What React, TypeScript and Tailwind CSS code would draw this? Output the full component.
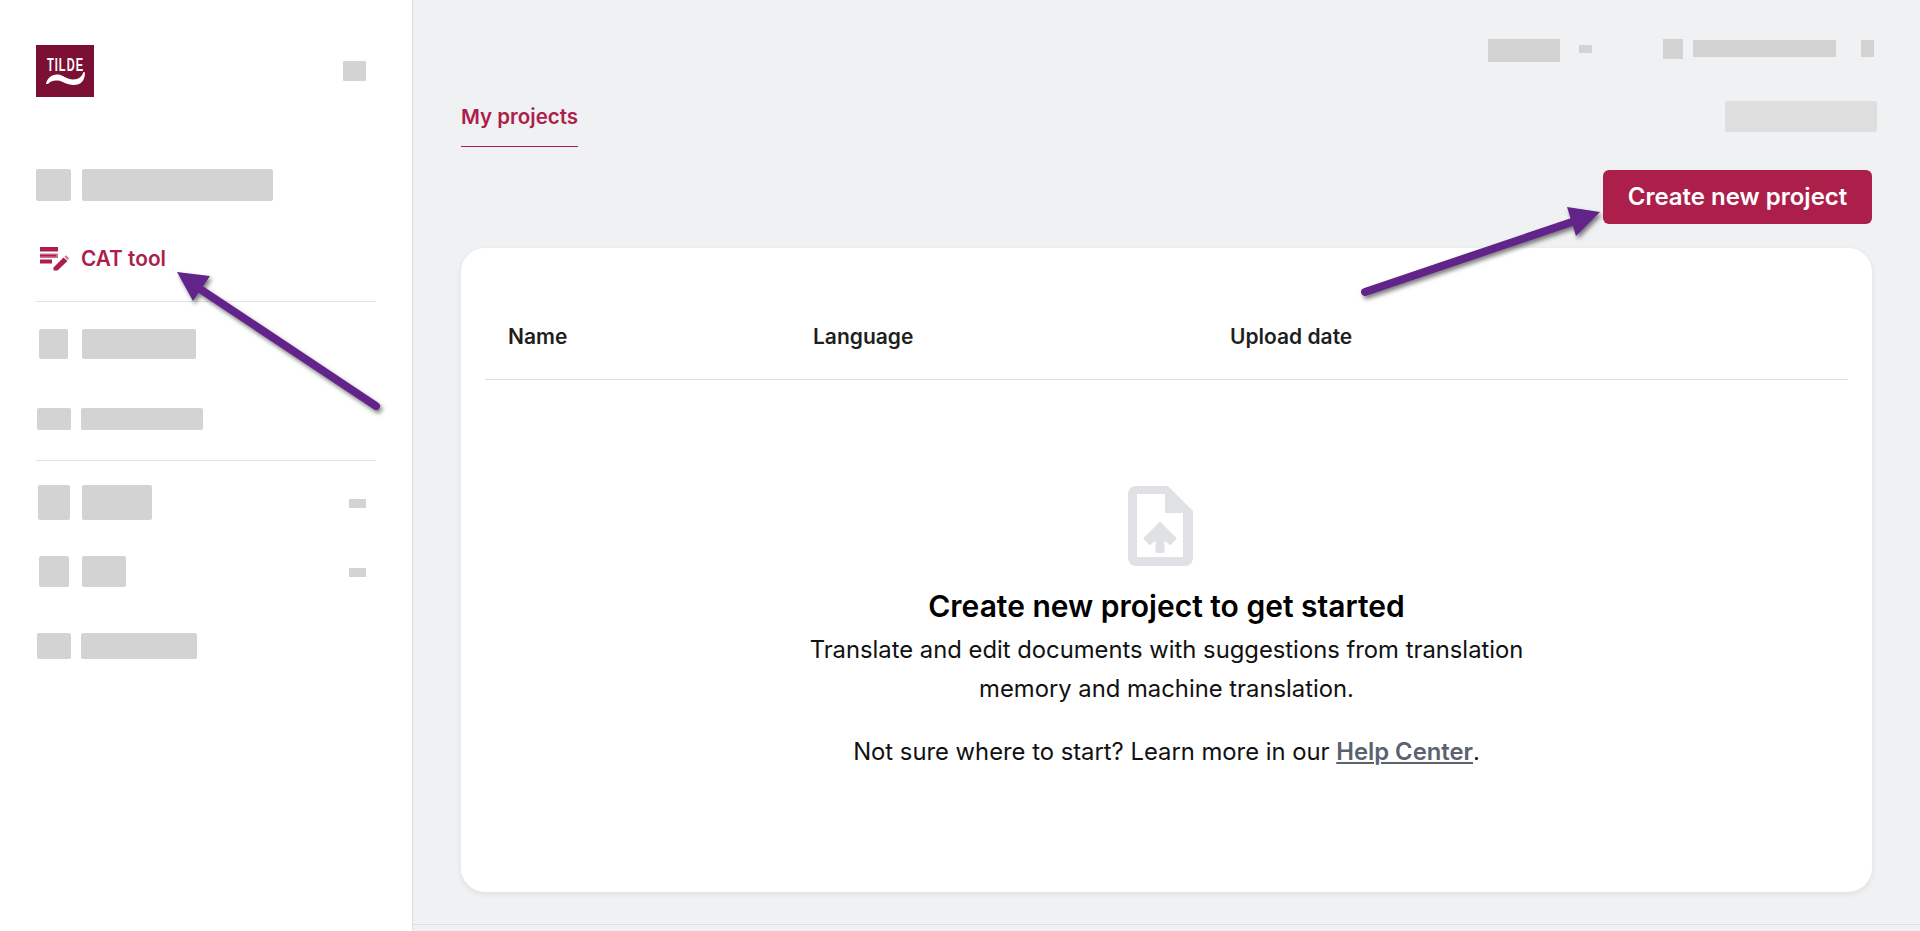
const FONT = "font-['Inter','Noto_Sans',sans-serif]";

interface RowProps {
  height: string;
  iconClass: string;
  barClass: string;
  chevron?: boolean;
}

// blurred-out menu entry: grey icon block + grey label block
function BlankRow({ height, iconClass, barClass, chevron }: RowProps) {
  return (
    <div className={`flex items-center ${height}`}>
      <div className={`h-full rounded-[2px] bg-[#d3d3d3] ${iconClass}`} />
      <div className={`h-full rounded-[2px] bg-[#d3d3d3] ${barClass}`} />
      {chevron && <div className="ml-auto mr-[10px] mt-[2px] h-[9px] w-[17px] bg-[#d3d3d3]" />}
    </div>
  );
}

function Logo() {
  return (
    <svg viewBox="0 0 58 52" className="h-[52px] w-[58px]">
      <rect width="58" height="52" fill="#7c1034" />
      <text
        transform="translate(11 26) scale(0.58 1)"
        fill="#fff"
        fontFamily="Liberation Sans, sans-serif"
        fontWeight="700"
        fontSize="19"
        letterSpacing="1.8"
      >
        TILDE
      </text>
      <path
        d="M10 39c1-6 6-10 12-9.500 5 .5 9 5 15 5 6 0 9-3 10.500-7.500l1.500 .5c0 8-4 12.500-11.500 12.500-7 0-10.500-4-15.500-4.500-4.500-.5-8 .8-10 3.500z"
        fill="#fff"
      />
    </svg>
  );
}

function CatIcon() {
  return (
    <svg viewBox="0 0 29 24" className="h-[24px] w-[29px]">
      <rect x="0" y="0" width="18" height="4.500" fill="#ac1f4b" />
      <rect x="0" y="6.500" width="18" height="4.500" fill="#c9718c" />
      <rect x="0" y="7.800" width="16" height="1.600" fill="#ac1f4b" />
      <rect x="0" y="12.500" width="12" height="4" fill="#ac1f4b" />
      <path d="M13.500 20.500l10-10 4 3.500-10 9.500h-4z" fill="#ac1f4b" />
      <path d="M24.500 9.500l1.500-1.300 3 3-1.300 1.800z" fill="#c9718c" />
    </svg>
  );
}

function FileUploadIcon() {
  return (
    <svg viewBox="0 0 65 80" className="mr-[12px] h-[80px] w-[65px]">
      <path
        fillRule="evenodd"
        d="M8 0H40L65 25V72a8 8 0 0 1-8 8H8a8 8 0 0 1-8-8V8a8 8 0 0 1 8-8zM9 8V71H55V27H37V8z"
        fill="#dfe1e5"
      />
      <path d="M32 35.500L49 52.500 42 59.500 36.500 54.500V67H27.500V54.500L22 59.500 15 52.500z" fill="#dfe1e5" />
    </svg>
  );
}

function Arrows() {
  return (
    <svg
      viewBox="0 0 1920 931"
      className="pointer-events-none absolute left-0 top-0 h-[931px] w-[1920px] drop-shadow-[2px_3px_2px_rgba(0,0,0,0.5)]"
    >
      <line x1="376" y1="406" x2="200" y2="289" stroke="#62238a" strokeWidth="8" strokeLinecap="round" />
      <polygon points="177,272 210,276 193,301" fill="#62238a" />
      <line x1="1365" y1="292" x2="1572" y2="222" stroke="#62238a" strokeWidth="8" strokeLinecap="round" />
      <polygon points="1600,212 1567,207 1576,236" fill="#62238a" />
    </svg>
  );
}

export default function App() {
  return (
    <div className={`relative flex h-[931px] w-[1920px] overflow-hidden bg-[#f0f1f3] ${FONT}`}>
      <aside className="h-full w-[413px] shrink-0 border-r border-[#dcdee2] bg-white px-[36px]">
        <div className="mt-[45px] flex h-[52px] items-center justify-between pr-[10px]">
          <Logo />
          <div className="h-[20px] w-[23px] rounded-[1px] bg-[#d3d3d3]" />
        </div>

        <div className="mt-[72px]">
          <BlankRow height="h-[32px]" iconClass="w-[35px]" barClass="ml-[11px] w-[191px]" />
        </div>

        <div className="mt-[42px] flex h-[32px] items-center">
          <div className="ml-[4px] flex w-[41px]">
            <CatIcon />
          </div>
          <span className="text-[20.800px] font-semibold text-[#ac1f4b]">CAT tool</span>
        </div>

        <div className="mt-[26px] h-px bg-[#e1e3e6]" />

        <div className="mt-[27px]">
          <BlankRow height="h-[30px]" iconClass="ml-[3px] w-[29px]" barClass="ml-[14px] w-[114px]" />
        </div>
        <div className="mt-[49px]">
          <BlankRow height="h-[22px]" iconClass="ml-[1px] w-[34px]" barClass="ml-[10px] w-[122px]" />
        </div>

        <div className="mt-[30px] h-px bg-[#e1e3e6]" />

        <div className="mt-[24px]">
          <BlankRow height="h-[35px]" iconClass="ml-[2px] w-[32px]" barClass="ml-[12px] w-[70px]" chevron />
        </div>
        <div className="mt-[36px]">
          <BlankRow height="h-[31px]" iconClass="ml-[3px] w-[30px]" barClass="ml-[13px] w-[44px]" chevron />
        </div>
        <div className="mt-[46px]">
          <BlankRow height="h-[26px]" iconClass="ml-[1px] w-[34px]" barClass="ml-[10px] w-[116px]" />
        </div>
      </aside>

      <main className="flex h-full flex-1 flex-col">
        <div className="flex items-start justify-end pr-[46px] pt-[39px]">
          <div className="h-[23px] w-[72px] bg-[#d3d3d3]" />
          <div className="ml-[19px] mt-[6px] h-[8px] w-[13px] bg-[#d3d3d3]" />
          <div className="ml-[71px] h-[20px] w-[20px] bg-[#d3d3d3]" />
          <div className="ml-[10px] mt-[1px] h-[17px] w-[143px] bg-[#d3d3d3]" />
          <div className="ml-[25px] mt-[1px] h-[17px] w-[13px] bg-[#d3d3d3]" />
        </div>

        <div className="mt-[39px] flex items-start justify-between pl-[48px] pr-[43px]">
          <div className="flex h-[46px] items-center border-b border-[#ac1f4b] pb-[13px] text-[20.500px] font-semibold text-[#ac1f4b]">
            My projects
          </div>
          <div className="h-[31px] w-[152px] rounded-[3px] bg-[#dedede]" />
        </div>

        <div className="mt-[23px] flex justify-end pr-[48px]">
          <button className="h-[54px] w-[269px] rounded-[6px] bg-[#ad1f4b] text-[24px] font-semibold text-white">
            Create new project
          </button>
        </div>

        <section className="mx-[48px] mt-[24px] h-[644px] rounded-[24px] bg-white shadow-[0_2px_6px_rgba(0,0,0,0.08)]">
          <div className="mx-[24px] grid h-[132px] grid-cols-[305px_417px_1fr] border-b border-[#dcdee2] pl-[23px] pt-[76px] text-[21px] font-semibold leading-[26px] text-[#1f1f1f]">
            <div>Name</div>
            <div>Language</div>
            <div>Upload date</div>
          </div>

          <div className="flex flex-col items-center pt-[106px] text-center">
            <FileUploadIcon />
            <h2 className="mt-[22px] text-[30px] font-semibold leading-[36px] text-black">
              Create new project to get started
            </h2>
            <p className="mt-[6px] text-[23.800px] leading-[39px] text-[#111111]">
              Translate and edit documents with suggestions from translation
              <br />
              memory and machine translation.
            </p>
            <p className="mt-[24px] text-[23.800px] leading-[39px] text-[#111111]">
              Not sure where to start? Learn more in our{" "}
              <a className="font-semibold text-[#5a6270] underline">Help Center</a>.
            </p>
          </div>
        </section>

        <div className="mt-[32px] flex-1 border-t border-[#dcdee2]" />
      </main>

      <Arrows />
    </div>
  );
}
